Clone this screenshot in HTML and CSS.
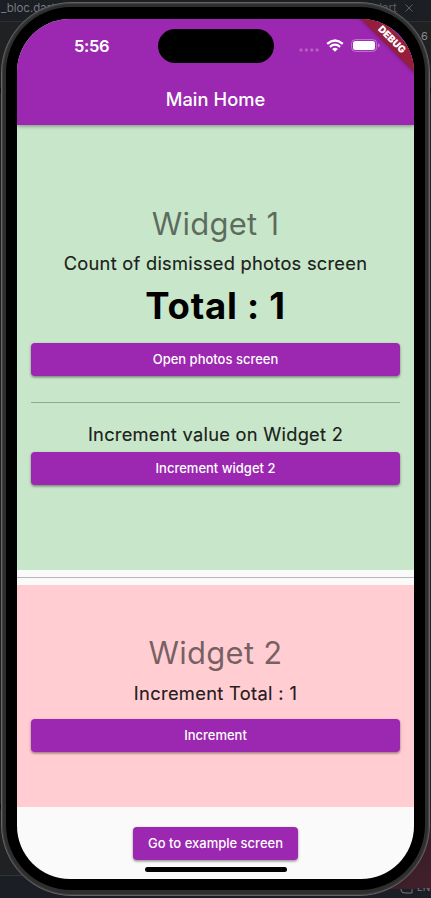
FILE: index.html
```html
<!DOCTYPE html>
<html lang="en">
<head>
<meta charset="utf-8">
<title>Main Home</title>
<link rel="stylesheet" href="styles.css">
</head>
<body>
<div class="desktop">
  <span class="tab-left">_bloc.dart</span>
  <span class="tab-right">dart</span>
  <svg class="tab-close" viewBox="0 0 8 8"><path d="M.5.5l7 7M7.5.5l-7 7"/></svg>
  <span class="issue-count">6</span>
  <svg class="tool-icon" viewBox="0 0 13 8"><path d="M1 0v1q0 3 4 3h7V0"/></svg>
  <span class="tool-label">LN</span>
  <i class="rail-mark rail-top"></i>
  <i class="rail-mark rail-bottom"></i>
</div>
<div class="phone">
  <div class="bezel">
    <main class="screen">
      <header class="app-bar">
        <div class="status">
          <span class="time">5:56</span>
          <span class="island"></span>
          <span class="indicators">
            <svg class="dots" viewBox="0 0 20 4"><circle cx="2" cy="2" r="1.7"/><circle cx="7.4" cy="2" r="1.7"/><circle cx="12.8" cy="2" r="1.7"/><circle cx="18.1" cy="2" r="1.7"/></svg>
            <svg class="wifi" viewBox="0 0 18 13"><path d="M1.2 4.9Q9-1.8 16.8 4.9M3.9 7.8Q9 3.5 14.1 7.8"/><path class="wifi-base" d="M6.1 9.9Q9 7.6 11.9 9.9L9 12.8z"/></svg>
            <svg class="battery" viewBox="0 0 29 13"><rect class="shell" x=".6" y=".6" width="25" height="11.8" rx="3.8"/><rect class="charge" x="2" y="2" width="22" height="9" rx="2.5"/><path class="cap" d="M27 4.5q1.7.5 1.7 2t-1.7 2z"/></svg>
          </span>
        </div>
        <h1 class="title">Main Home</h1>
      </header>
      <section class="panel panel-green">
        <h2 class="heading heading-one">Widget 1</h2>
        <p class="line count">Count of dismissed photos screen</p>
        <p class="total">Total : 1</p>
        <button class="button open">Open photos screen</button>
        <hr class="rule">
        <p class="line value">Increment value on Widget 2</p>
        <button class="button">Increment widget 2</button>
      </section>
      <hr class="separator">
      <section class="panel panel-pink">
        <h2 class="heading heading-two">Widget 2</h2>
        <p class="line increment">Increment Total : 1</p>
        <button class="button">Increment</button>
      </section>
      <footer class="footer">
        <button class="button example">Go to example screen</button>
        <div class="home-indicator"></div>
      </footer>
      <div class="debug">DEBUG</div>
    </main>
  </div>
</div>
</body>
</html>
```
FILE: styles.css
```css
* { box-sizing: border-box; }
body { margin: 0; width: 431px; height: 898px; overflow: hidden; position: relative; background: #202123; font-family: Inter, "Liberation Sans", sans-serif; }
h1, h2, p, hr { margin: 0; border: 0; font-weight: 400; white-space: nowrap; }
.desktop { position: absolute; inset: 0; color: #777b82; font-size: 11.5px; background: linear-gradient(#1b1e23 0 21px, #2c2e31 21px 22px, #202123 22px 875px, #30343d 875px 876px, #1b1e25 876px); }
.desktop::after { content: ""; position: absolute; right: 0; bottom: 9px; width: 80px; height: 90px; background: linear-gradient(135deg, #26161b, #42202c); }
.tab-left { position: absolute; left: 1px; top: 1px; }
.tab-right { position: absolute; left: 375px; top: 1px; color: #595c61; }
.tab-close { position: absolute; left: 405px; top: 4px; width: 8px; height: 8px; stroke: #5b5e62; fill: none; }
.issue-count { position: absolute; left: 421px; top: 29px; font-size: 11px; color: #8a8b8d; }
.tool-icon { position: absolute; left: 400px; top: 889px; width: 13px; height: 8px; stroke: #777; fill: none; z-index: 1; }
.tool-label { position: absolute; left: 417px; top: 881px; font-size: 10px; z-index: 1; clip-path: inset(7px 0 0); }
.rail-mark { position: absolute; left: 0; width: 431px; height: 5px; background: #111; }
.rail-top { top: 88px; }
.rail-bottom { top: 804px; }
.phone { position: absolute; left: 1px; top: 2px; width: 429px; height: 894px; padding: 4px 5px 5px 4px; border: 1px solid #646464; border-radius: 71px; background: #2e2e2e; box-shadow: inset 0 0 0 1px #424242; }
.bezel { width: 419px; height: 883px; padding: 12px 11px 11px; border-radius: 65px; background: #000; }
.screen { position: relative; height: 860px; width: 397px; overflow: hidden; border-radius: 53px; background: #fafafa; display: flex; flex-direction: column; }
.app-bar { position: relative; z-index: 1; flex: 0 0 106px; background: #9c27b0; color: #fff; box-shadow: 0 1px 4px #0006; }
.status { height: 54px; display: grid; grid-template-columns: 141px 116px 1fr; align-items: center; }
.time { padding-left: 57px; font-size: 16.5px; font-weight: 600; letter-spacing: -.3px; }
.island { height: 34px; border-radius: 17px; background: #000; }
.indicators { display: flex; align-items: center; padding-left: 25px; }
.dots { width: 20px; height: 4px; margin-top: 8px; fill: #b75cc7; }
.wifi { width: 18px; height: 13px; margin: -2px 0 0 7px; stroke: #fff; stroke-width: 2.3; fill: none; overflow: visible; }
.wifi .wifi-base { fill: #fff; stroke: none; }
.battery { width: 29px; height: 13px; margin: -2px 0 0 7px; }
.shell { fill: none; stroke: #c477d0; stroke-width: 1; }
.charge { fill: #fff; }
.cap { fill: #c477d0; }
.title { margin-top: 15px; text-align: center; font-size: 18.3px; line-height: 22px; font-weight: 500; letter-spacing: .05px; }
.panel { display: flex; flex-direction: column; align-items: center; padding: 0 14px; }
.panel-green { flex: 0 0 445px; background: #c8e6c9; padding-top: 80px; }
.panel-pink { flex: 0 0 222px; background: #ffcdd2; padding-top: 49px; }
.heading { font-size: 31px; line-height: 38px; color: #0000008a; letter-spacing: .25px; }
.line { font-size: 18.3px; line-height: 22px; color: #000000de; letter-spacing: .26px; -webkit-text-stroke: .2px #000000de; }
.count { margin-top: 9px; }
.total { margin-top: 10px; font-size: 36.5px; line-height: 44px; font-weight: 700; letter-spacing: .75px; }
.button { display: block; width: 369px; height: 33px; padding: 0; border: 0; border-radius: 4px; background: #9c27b0; color: #fff; font: 500 13px/33px Inter, sans-serif; text-align: center; box-shadow: 0 2px 2px #0002, 0 1px 3px #0005; }
.open { margin-top: 15px; }
.rule { width: 100%; height: 1px; margin-top: 26px; background: #91a892; }
.value { margin: 20px 0 6.5px; }
.separator { flex: 0 0 15px; background: linear-gradient(#fafafa 0 7px, #b7b7b7 7px 8px, #fafafa 8px); }
.increment { margin: 10px 0 14.5px; letter-spacing: .33px; }
.footer { display: flex; flex-direction: column; align-items: center; padding-top: 20px; }
.example { width: 165px; }
.home-indicator { width: 142px; height: 5px; margin-top: 7px; border-radius: 3px; background: #000; }
.debug { position: absolute; z-index: 2; right: -32px; top: 13px; width: 110px; height: 14px; padding-left: 2px; transform: rotate(45deg); background: #961e3c; box-shadow: 0 0 4px #0006; color: #fff; font-size: 9.8px; line-height: 14px; font-weight: 900; text-align: center; }
```
